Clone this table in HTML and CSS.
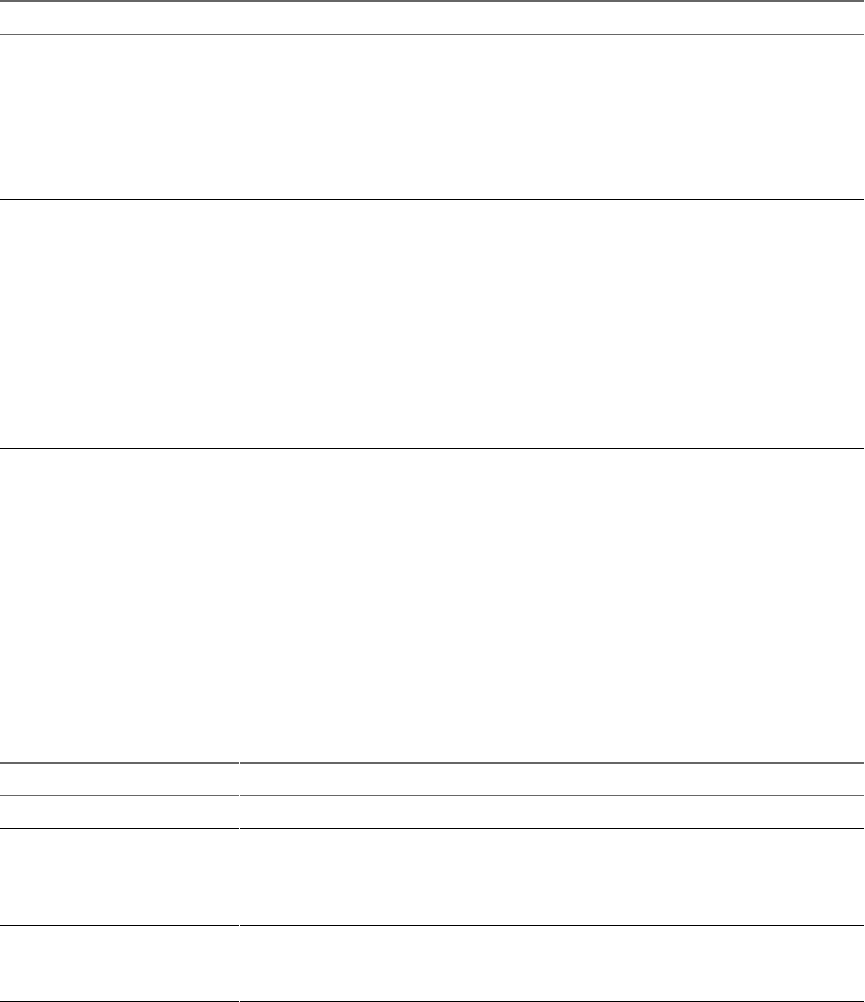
FILE: index.html
```html
<!DOCTYPE html>
<html lang="en">
<head>
<meta charset="utf-8">
<title>Tables</title>
<link rel="stylesheet" href="styles.css">
</head>
<body>
  <section class="table table-main">
    <div class="row row-head"></div>
    <div class="row row-a"></div>
    <div class="row row-b"></div>
  </section>
  <section class="table table-split">
    <div class="srow srow-head"><div class="cell cell-key"></div><div class="cell cell-val"></div></div>
    <div class="srow srow-a"><div class="cell cell-key"></div><div class="cell cell-val"></div></div>
    <div class="srow srow-b"><div class="cell cell-key"></div><div class="cell cell-val"></div></div>
    <div class="srow srow-c"><div class="cell cell-key"></div><div class="cell cell-val"></div></div>
  </section>
</body>
</html>
```
FILE: styles.css
```css
html, body {
  margin: 0;
  padding: 0;
  background: #ffffff;
  font-family: "Liberation Sans", Arial, sans-serif;
}
body {
  width: 864px;
}
.table {
  display: flex;
  flex-direction: column;
}
.table-main {
  border-top: 2px solid #666666;
}
.row {
  border-bottom: 1px solid #000000;
}
.row-head {
  height: 32px;
  border-bottom-color: #666666;
}
.row-a { height: 164px; }
.row-b { height: 248px; }

.table-split {
  margin-top: 313px;
}
.srow {
  display: flex;
  column-gap: 1px;
}
.cell {
  border-bottom: 1px solid #000000;
}
.cell-key { width: 239px; }
.cell-val { flex: 1; }
.srow-head .cell {
  border-top: 2px solid #666666;
  border-bottom-color: #666666;
  height: 31px;
}
.srow-a .cell { height: 32px; }
.srow-b .cell { height: 96px; }
.srow-c .cell { height: 75px; }
```
